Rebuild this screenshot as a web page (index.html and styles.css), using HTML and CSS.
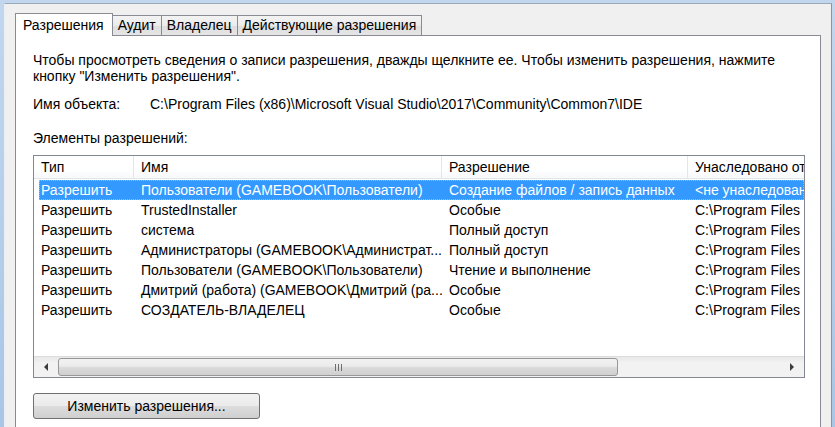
FILE: index.html
```html
<!DOCTYPE html>
<html lang="ru">
<head>
<meta charset="utf-8">
<title>Разрешения</title>
<link rel="stylesheet" href="styles.css">
</head>
<body>
<div class="window">
  <div class="tabs">
    <div class="tab tab-active">Разрешения</div>
    <div class="tab">Аудит</div>
    <div class="tab">Владелец</div>
    <div class="tab">Действующие разрешения</div>
  </div>
  <div class="panel">
    <p class="intro">Чтобы просмотреть сведения о записи разрешения, дважды щелкните ее. Чтобы изменить разрешения, нажмите<br>кнопку "Изменить разрешения".</p>
    <div class="object">
      <span class="object-label">Имя объекта:</span>
      <span class="object-path">C:\Program Files (x86)\Microsoft Visual Studio\2017\Community\Common7\IDE</span>
    </div>
    <div class="section-label">Элементы разрешений:</div>
    <div class="listbox">
      <div class="viewport">
        <div class="header">
          <div class="hcell">Тип</div>
          <div class="hcell">Имя</div>
          <div class="hcell">Разрешение</div>
          <div class="hcell">Унаследовано от</div>
        </div>
        <div class="row selected">
          <div class="cell">Разрешить</div>
          <div class="cell">Пользователи (GAMEBOOK\Пользователи)</div>
          <div class="cell">Создание файлов / запись данных</div>
          <div class="cell">&lt;не унаследовано&gt;</div>
        </div>
        <div class="row">
          <div class="cell">Разрешить</div>
          <div class="cell">TrustedInstaller</div>
          <div class="cell">Особые</div>
          <div class="cell">C:\Program Files (x86)\Microsoft Visual Studio\</div>
        </div>
        <div class="row">
          <div class="cell">Разрешить</div>
          <div class="cell">система</div>
          <div class="cell">Полный доступ</div>
          <div class="cell">C:\Program Files (x86)\Microsoft Visual Studio\</div>
        </div>
        <div class="row">
          <div class="cell">Разрешить</div>
          <div class="cell">Администраторы (GAMEBOOK\Администрат...</div>
          <div class="cell">Полный доступ</div>
          <div class="cell">C:\Program Files (x86)\Microsoft Visual Studio\</div>
        </div>
        <div class="row">
          <div class="cell">Разрешить</div>
          <div class="cell">Пользователи (GAMEBOOK\Пользователи)</div>
          <div class="cell">Чтение и выполнение</div>
          <div class="cell">C:\Program Files (x86)\Microsoft Visual Studio\</div>
        </div>
        <div class="row">
          <div class="cell">Разрешить</div>
          <div class="cell">Дмитрий (работа) (GAMEBOOK\Дмитрий (ра...</div>
          <div class="cell">Особые</div>
          <div class="cell">C:\Program Files (x86)\Microsoft Visual Studio\</div>
        </div>
        <div class="row">
          <div class="cell">Разрешить</div>
          <div class="cell">СОЗДАТЕЛЬ-ВЛАДЕЛЕЦ</div>
          <div class="cell">Особые</div>
          <div class="cell">C:\Program Files (x86)\Microsoft Visual Studio\</div>
        </div>
      </div>
      <div class="hscroll">
        <div class="arrow arrow-left"></div>
        <div class="track">
          <div class="thumb"><span class="grip"></span></div>
        </div>
        <div class="arrow arrow-right"></div>
      </div>
    </div>
    <button class="btn" type="button">Изменить разрешения...</button>
  </div>
</div>
</body>
</html>
```
FILE: styles.css
```css
html, body {
  margin: 0;
  height: 100%;
  overflow: hidden;
}
body {
  background: linear-gradient(180deg, #c2d7ee 0%, #a9c6e6 100%);
  font-family: "Liberation Sans", Arial, sans-serif;
  font-size: 14px;
  color: #000;
}
.window {
  box-sizing: border-box;
  height: calc(100% - 3px);
  margin: 3px 3px 0 4px;
  padding: 9px 10px 0 10px;
  background: #f0f0f0;
  border-top: 1px solid #9aa9bb;
  border-left: 1px solid #e9eef4;
  border-right: 1px solid #8e9299;
  display: flex;
  flex-direction: column;
}
.tabs {
  display: flex;
  align-items: flex-end;
}
.tab {
  box-sizing: border-box;
  height: 20px;
  padding: 0 5px 0 5px;
  line-height: 19px;
  border: 1px solid #898c95;
  border-bottom: none;
  border-left: none;
  background: linear-gradient(180deg, #f3f3f3 0%, #ebebeb 50%, #dedede 51%, #e5e5e5 100%);
  white-space: nowrap;
}
.tab-active {
  position: relative;
  z-index: 1;
  height: 23px;
  margin-bottom: -1px;
  padding: 0 8px 0 7px;
  line-height: 22px;
  border-left: 1px solid #898c95;
  background: #fff;
}
.panel {
  flex: 1;
  background: #fff;
  border: 1px solid #898c95;
  border-bottom: none;
  padding: 16px 15px 0 17px;
}
.intro {
  margin: 0;
  line-height: 16px;
}
.object {
  margin-top: 12px;
  display: flex;
  line-height: 16px;
}
.object-label {
  width: 117px;
}
.section-label {
  margin-top: 18px;
  line-height: 16px;
}
.listbox {
  margin-top: 9px;
  height: 223px;
  box-sizing: border-box;
  border: 1px solid #828790;
  display: flex;
  flex-direction: column;
  overflow: hidden;
}
.viewport {
  flex: 1;
  overflow: hidden;
}
.header {
  display: grid;
  grid-template-columns: 100px 308px 246px 200px;
  height: 23px;
  box-sizing: border-box;
  border-bottom: 1px solid #e5e5e5;
  background: linear-gradient(180deg, #ffffff 0%, #ffffff 60%, #f7f8fa 100%);
  white-space: nowrap;
}
.hcell {
  padding-left: 7px;
  line-height: 22px;
  border-right: 1px solid #e5e5e5;
}
.row {
  display: grid;
  grid-template-columns: 95px 308px 246px 240px;
  height: 20px;
  margin-left: 5px;
  line-height: 20px;
  white-space: nowrap;
}
.header + .row {
  margin-top: 1px;
}
.cell {
  padding-left: 2px;
  overflow: hidden;
}
.cell + .cell {
  padding-left: 7px;
}
.selected {
  background: #3399ff;
  color: #fff;
  outline: 1px dotted #d9b27a;
  outline-offset: -1px;
}
.hscroll {
  height: 21px;
  box-sizing: border-box;
  border-top: 1px solid #dcdcdc;
  background: linear-gradient(180deg, #e8e8e8 0%, #f2f2f2 30%, #f2f2f2 100%);
  display: flex;
  align-items: center;
}
.arrow {
  width: 24px;
  height: 100%;
  display: flex;
  align-items: center;
  justify-content: center;
}
.arrow-left::before {
  content: "";
  border-top: 4px solid transparent;
  border-bottom: 4px solid transparent;
  border-right: 4px solid #3d3d3d;
}
.arrow-right::before {
  content: "";
  border-top: 4px solid transparent;
  border-bottom: 4px solid transparent;
  border-left: 4px solid #3d3d3d;
}
.track {
  flex: 1;
  height: 100%;
  display: flex;
  align-items: center;
}
.thumb {
  box-sizing: border-box;
  width: 560px;
  height: 18px;
  border: 1px solid #979797;
  border-radius: 3px;
  background: linear-gradient(180deg, #f2f2f2 0%, #ebebeb 45%, #d9d9d9 55%, #d0d0d0 100%);
  display: flex;
  align-items: center;
  justify-content: center;
}
.grip {
  width: 7px;
  height: 7px;
  background: repeating-linear-gradient(90deg, #6e6e6e 0 1px, transparent 1px 3px);
}
.btn {
  margin-top: 15px;
  width: 227px;
  height: 26px;
  font: inherit;
  color: #000;
  border: 1px solid #707070;
  border-radius: 3px;
  background: linear-gradient(180deg, #f2f2f2 0%, #ebebeb 50%, #dddddd 51%, #cfcfcf 100%);
  padding: 0;
  display: block;
}
```
